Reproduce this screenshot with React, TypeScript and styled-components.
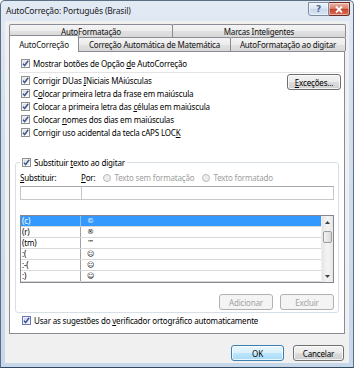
import React from 'react';
import styled, { createGlobalStyle } from 'styled-components';

const GlobalStyle = createGlobalStyle`
  html, body { margin: 0; padding: 0; background: #ffffff; }
  body { font-family: "Noto Sans", "Open Sans", sans-serif; font-size: 8px; letter-spacing: -0.18px; color: #000; }
  * { box-sizing: border-box; }
`;

const Window = styled.div`
  width: 354px;
  height: 368px;
  display: flex;
  flex-direction: column;
  border: 1px solid #5b6e84;
  border-bottom-color: #2f4a60;
  border-radius: 5px 5px 0 0;
  background: linear-gradient(180deg, #e2eaf4 0%, #d3dfee 30%, #c7d7ea 100%);
  overflow: hidden;
`;

const TitleBar = styled.div`
  height: 20px;
  flex: none;
  display: flex;
  align-items: flex-start;
  padding: 0 3px 0 5px;
`;

const Title = styled.div`
  flex: 1;
  height: 19px;
  display: flex;
  align-items: center;
  font-size: 8.5px;
  color: #1b1b1b;
`;

const CaptionButtons = styled.div`
  display: flex;
  margin-top: 1px;
`;

const CaptionButton = styled.div<{ $close?: boolean }>`
  width: 21px;
  height: 14px;
  display: flex;
  align-items: center;
  justify-content: center;
  border: 1px solid ${p => (p.$close ? '#6d2a22' : '#7a8aa0')};
  border-left-width: ${p => (p.$close ? 0 : 1)}px;
  border-radius: ${p => (p.$close ? '0 0 3px 0' : '0 0 0 3px')};
  background: ${p =>
    p.$close
      ? 'linear-gradient(180deg, #eab3a5 0%, #d98370 45%, #c5442c 50%, #d8705a 100%)'
      : 'linear-gradient(180deg, #eef3f9 0%, #dce6f3 45%, #c8d7eb 50%, #d9e5f4 100%)'};
  box-shadow: inset 0 0 0 1px rgba(255, 255, 255, 0.45);
  color: ${p => (p.$close ? '#ffffff' : '#4a6690')};
  font-family: "DejaVu Sans", sans-serif;
  font-weight: bold;
  font-size: 9px;
  letter-spacing: 0;
`;

const Body = styled.div`
  flex: 1;
  display: flex;
  padding: 0 4px 4px 4px;
`;

const Client = styled.div`
  flex: 1;
  display: flex;
  flex-direction: column;
  background: #f0f0f0;
  padding: 3px 4px 0 4px;
`;

const TabRow = styled.div<{ $h: number }>`
  display: flex;
  height: ${p => p.$h}px;
  flex: none;
`;

const Tab = styled.div<{ $w: number; $active?: boolean }>`
  width: ${p => p.$w}px;
  flex: none;
  margin-right: -1px;
  display: flex;
  align-items: center;
  justify-content: center;
  border: 1px solid #898c95;
  border-bottom: 0;
  border-radius: 2px 2px 0 0;
  background: ${p =>
    p.$active ? '#ffffff' : 'linear-gradient(180deg, #f4f4f4 0%, #ececec 50%, #e1e1e1 51%, #d8d8d8 100%)'};
  color: #111;
  white-space: nowrap;
  position: relative;
  z-index: ${p => (p.$active ? 2 : 0)};
  margin-top: ${p => (p.$active ? -2 : 0)}px;
  margin-bottom: ${p => (p.$active ? -1 : 0)}px;
`;

const Panel = styled.div`
  height: 283px;
  flex: none;
  border: 1px solid #898c95;
  background: #ffffff;
  display: flex;
  flex-direction: column;
  padding: 5px 3px 0 11px;
`;

const CheckRow = styled.label<{ $indent?: number; $gapTop?: number }>`
  display: flex;
  align-items: center;
  gap: 3px;
  height: 13px;
  margin-left: ${p => p.$indent ?? 0}px;
  margin-top: ${p => p.$gapTop ?? 0}px;
  white-space: nowrap;
`;

const Box = styled.span<{ $hot?: boolean }>`
  width: 9px;
  height: 9px;
  flex: none;
  display: flex;
  align-items: center;
  justify-content: center;
  border: 1px solid ${p => (p.$hot ? '#6a78b8' : '#8f8f8f')};
  background: ${p =>
    p.$hot
      ? 'linear-gradient(135deg, #c9cdf0 0%, #eef0fb 100%)'
      : 'linear-gradient(135deg, #d8d8d8 0%, #f7f7f7 100%)'};
  box-shadow: inset 0 0 0 1px rgba(255, 255, 255, 0.6);
`;

const U = styled.u`
  text-decoration: underline;
  text-underline-offset: 1px;
`;

const Separator = styled.div`
  height: 1px;
  margin: 2px 0 0 -2px;
  background: #e4e4e4;
`;

const OptionsBlock = styled.div`
  display: flex;
  margin-top: 1px;
`;

const OptionsList = styled.div`
  flex: 1;
  display: flex;
  flex-direction: column;
`;

const PushButton = styled.button<{ $w: number; $default?: boolean }>`
  width: ${p => p.$w}px;
  height: 16px;
  padding: 0;
  font: inherit;
  letter-spacing: inherit;
  color: #000;
  border: 1px solid ${p => (p.$default ? '#3c7fb1' : '#707070')};
  border-radius: 3px;
  background: ${p =>
    p.$default
      ? 'linear-gradient(180deg, #eaf6fd 0%, #d9f0fc 50%, #bee6fd 51%, #a7d9f5 100%)'
      : 'linear-gradient(180deg, #f2f2f2 0%, #ebebeb 50%, #dddddd 51%, #cfcfcf 100%)'};
  box-shadow: inset 0 0 0 1px rgba(255, 255, 255, 0.75);
  &:disabled {
    color: #a3a3a3;
    border-color: #adb2b5;
    background: #f4f4f4;
    box-shadow: none;
  }
`;

const Group = styled.fieldset`
  margin: 17px 2px 0 -6px;
  padding: 0 4px 2px 4px;
  border: 1px solid #d5dfe5;
  border-radius: 3px;
  min-width: 0;
`;

const Legend = styled.legend`
  padding: 0 2px;
`;

const LabelsRow = styled.div`
  display: flex;
  align-items: center;
  height: 11px;
  margin-top: 3px;
`;

const FieldLabel = styled.span<{ $w?: number }>`
  width: ${p => (p.$w ? `${p.$w}px` : 'auto')};
  flex: none;
  white-space: nowrap;
`;

const Radio = styled.label`
  display: flex;
  align-items: center;
  gap: 3px;
  color: #a0a0a0;
  margin-left: 8px;
  white-space: nowrap;
`;

const RadioDot = styled.span`
  width: 8px;
  height: 8px;
  border-radius: 50%;
  border: 1px solid #b8b8b8;
  background: radial-gradient(circle, #e8e8e8 0%, #f6f6f6 100%);
`;

const InputsRow = styled.div`
  display: flex;
  height: 14px;
  margin-top: 3px;
`;

const TextBox = styled.div<{ $w?: number }>`
  ${p => (p.$w ? `width: ${p.$w}px; flex: none;` : 'flex: 1; margin-left: -1px;')}
  height: 14px;
  border: 1px solid #c4c8cc;
  border-top-color: #a6aab0;
  background: #fff;
`;

const ListBox = styled.div`
  margin-top: 15px;
  height: 68px;
  border: 1px solid #828790;
  display: flex;
  background: #fff;
`;

const Rows = styled.div`
  flex: 1;
  overflow: hidden;
`;

const ListRow = styled.div<{ $selected?: boolean }>`
  display: grid;
  grid-template-columns: 60px 1fr;
  height: 11px;
  border-bottom: 1px solid #d9d9d9;
  background: ${p => (p.$selected ? '#3399ff' : '#ffffff')};
  color: ${p => (p.$selected ? '#ffffff' : '#000000')};
  line-height: 10px;
`;

const Cell = styled.div<{ $first?: boolean; $selected?: boolean }>`
  padding-left: ${p => (p.$first ? 1 : 6)}px;
  border-right: ${p => (p.$first ? `1px solid ${p.$selected ? '#8fc3f7' : '#a0a0a0'}` : 'none')};
  white-space: nowrap;
  font-family: ${p => (p.$first ? 'inherit' : '"DejaVu Sans", sans-serif')};
  font-size: ${p => (p.$first ? 8 : 7)}px;
`;

const ScrollBar = styled.div`
  width: 12px;
  flex: none;
  display: flex;
  flex-direction: column;
  background: linear-gradient(90deg, #e6e6e6 0%, #f4f4f4 50%, #e8e8e8 100%);
  border-left: 1px solid #eeeeee;
`;

const ArrowBtn = styled.div`
  height: 12px;
  display: flex;
  align-items: center;
  justify-content: center;
`;

const Thumb = styled.div`
  height: 12px;
  margin: 3px 1px 0 1px;
  border: 1px solid #9d9d9d;
  border-radius: 2px;
  background: linear-gradient(90deg, #f3f3f3 0%, #e6e6e6 50%, #d9d9d9 100%);
`;

const Track = styled.div`
  flex: 1;
`;

const ButtonsRow = styled.div`
  display: flex;
  justify-content: flex-end;
  gap: 7px;
  margin-top: 11px;
`;

const Footer = styled.div`
  display: flex;
  justify-content: flex-end;
  gap: 9px;
  padding: 11px 1px 0 0;
`;

const Check: React.FC<{ hot?: boolean }> = ({ hot }) => (
  <Box $hot={hot}>
    <svg width="7" height="7" viewBox="0 0 7 7">
      <path d="M1 3.6 L2.6 5.6 L6.2 0.8" fill="none" stroke="#3a5290" strokeWidth="1.5" />
    </svg>
  </Box>
);

const rows: [string, string][] = [
  ['(c)', '©'],
  ['(r)', '®'],
  ['(tm)', '™'],
  [':(', '☹'],
  [':-(', '☹'],
  [':)', '☺'],
];

export default function App() {
  return (
    <>
      <GlobalStyle />
      <Window>
        <TitleBar>
          <Title>AutoCorreção: Português (Brasil)</Title>
          <CaptionButtons>
            <CaptionButton>?</CaptionButton>
            <CaptionButton $close>
              <svg width="8" height="7" viewBox="0 0 8 7">
                <path d="M1 0.5 L7 6.5 M7 0.5 L1 6.5" stroke="#ffffff" strokeWidth="1.8" />
              </svg>
            </CaptionButton>
          </CaptionButtons>
        </TitleBar>
        <Body>
          <Client>
            <TabRow $h={13}>
              <Tab $w={164}>AutoFormatação</Tab>
              <Tab $w={174}>Marcas Inteligentes</Tab>
            </TabRow>
            <TabRow $h={14}>
              <Tab $w={70} $active>AutoCorreção</Tab>
              <Tab $w={153}>Correção Automática de Matemática</Tab>
              <Tab $w={116}>AutoFormatação ao digitar</Tab>
            </TabRow>
            <Panel>
              <CheckRow>
                <Check />
                <span>Mostrar botões de Opção <U>d</U>e AutoCorreção</span>
              </CheckRow>
              <Separator />
              <OptionsBlock>
                <OptionsList>
                  <CheckRow>
                    <Check />
                    <span>Corrigir DUas <U>I</U>Niciais MAiúsculas</span>
                  </CheckRow>
                  <CheckRow>
                    <Check />
                    <span>C<U>o</U>locar primeira letra da frase em maiúscula</span>
                  </CheckRow>
                  <CheckRow>
                    <Check />
                    <span>Colocar a primeira letra das <U>c</U>élulas em maiúscula</span>
                  </CheckRow>
                  <CheckRow>
                    <Check />
                    <span>Colocar <U>n</U>omes dos dias em maiúsculas</span>
                  </CheckRow>
                  <CheckRow>
                    <Check />
                    <span>Corrigir uso acidental da tecla cAPS LOC<U>K</U></span>
                  </CheckRow>
                </OptionsList>
                <PushButton $w={54}><U>E</U>xceções...</PushButton>
              </OptionsBlock>
              <Group>
                <Legend>
                  <CheckRow>
                    <Check />
                    <span>Substituir <U>t</U>exto ao digitar</span>
                  </CheckRow>
                </Legend>
                <LabelsRow>
                  <FieldLabel $w={61}><U>S</U>ubstituir:</FieldLabel>
                  <FieldLabel><U>P</U>or:</FieldLabel>
                  <Radio>
                    <RadioDot />
                    Texto sem formatação
                  </Radio>
                  <Radio>
                    <RadioDot />
                    Texto formatado
                  </Radio>
                </LabelsRow>
                <InputsRow>
                  <TextBox $w={62} />
                  <TextBox />
                </InputsRow>
                <ListBox>
                  <Rows>
                    {rows.map(([a, b], i) => (
                      <ListRow key={i} $selected={i === 0}>
                        <Cell $first $selected={i === 0}>{a}</Cell>
                        <Cell>{b}</Cell>
                      </ListRow>
                    ))}
                  </Rows>
                  <ScrollBar>
                    <ArrowBtn>
                      <svg width="5" height="3" viewBox="0 0 5 3">
                        <path d="M0 3 L2.5 0 L5 3 Z" fill="#404040" />
                      </svg>
                    </ArrowBtn>
                    <Thumb />
                    <Track />
                    <ArrowBtn>
                      <svg width="5" height="3" viewBox="0 0 5 3">
                        <path d="M0 0 L2.5 3 L5 0 Z" fill="#404040" />
                      </svg>
                    </ArrowBtn>
                  </ScrollBar>
                </ListBox>
                <ButtonsRow>
                  <PushButton $w={54} disabled>Adicionar</PushButton>
                  <PushButton $w={54} disabled>Excluir</PushButton>
                </ButtonsRow>
              </Group>
              <CheckRow $indent={1} $gapTop={1}>
                <Check hot />
                <span>Usar as sugestões do <U>v</U>erificador ortográfico automaticamente</span>
              </CheckRow>
            </Panel>
            <Footer>
              <PushButton $w={53} $default>OK</PushButton>
              <PushButton $w={51}>Cancelar</PushButton>
            </Footer>
          </Client>
        </Body>
      </Window>
    </>
  );
}
